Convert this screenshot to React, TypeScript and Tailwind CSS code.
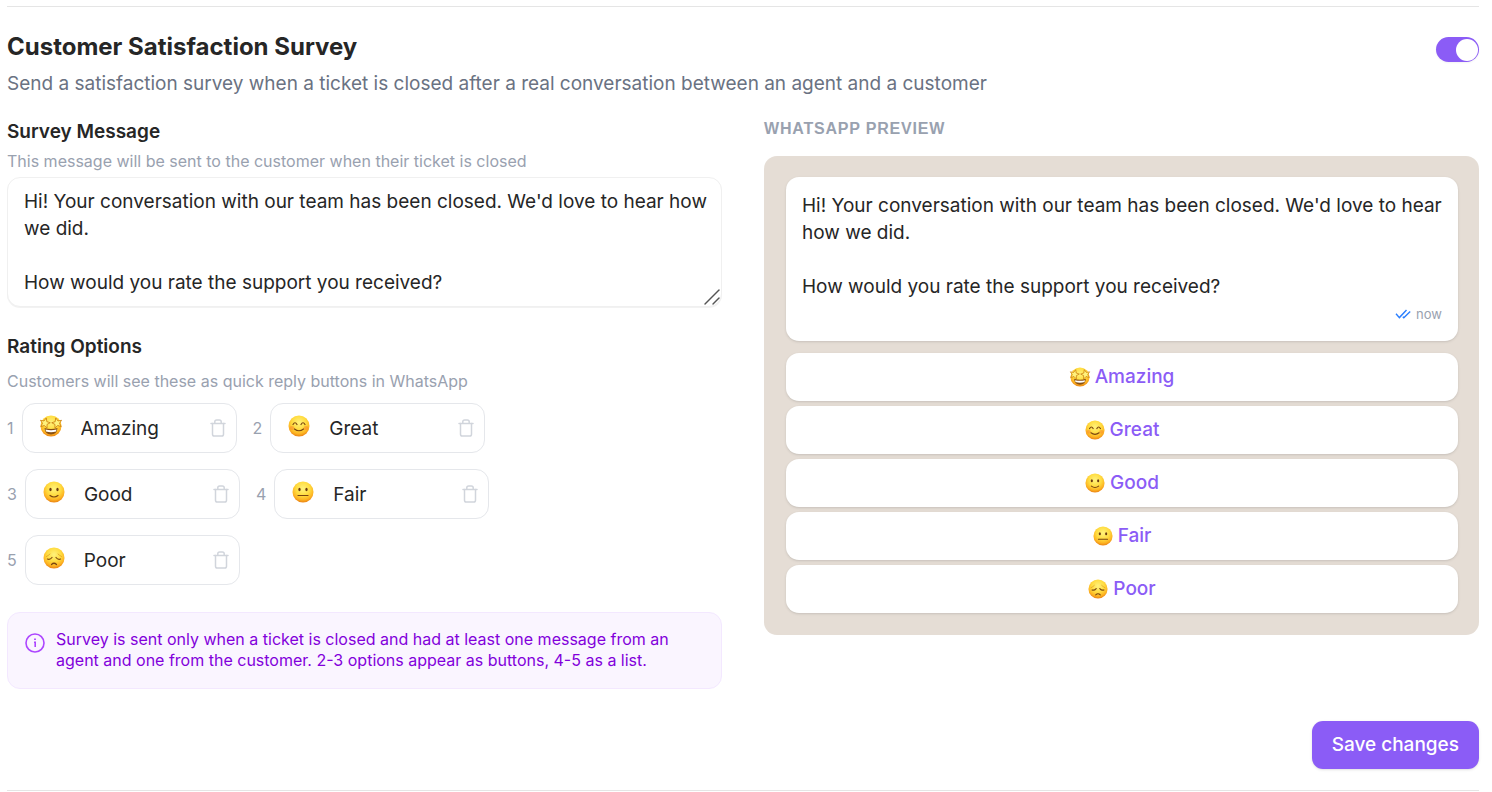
import React, { useState } from 'react';

type Mood = 'amazing' | 'great' | 'good' | 'fair' | 'poor';

interface RatingOption {
  id: Mood;
  label: string;
}

const initialOptions: RatingOption[] = [
  { id: 'amazing', label: 'Amazing' },
  { id: 'great', label: 'Great' },
  { id: 'good', label: 'Good' },
  { id: 'fair', label: 'Fair' },
  { id: 'poor', label: 'Poor' },
];

const defaultMessage =
  "Hi! Your conversation with our team has been closed. We'd love to hear how we did.\n\nHow would you rate the support you received?";

const star = 'M0 -7.2 L2 -2.4 L7 -2.1 L3.2 1.2 L4.4 6.2 L0 3.5 L-4.4 6.2 L-3.2 1.2 L-7 -2.1 L-2 -2.4 Z';

const Face: React.FC<{ mood: Mood; className: string }> = ({ mood, className }) => (
  <svg viewBox="0 0 44 44" className={`overflow-visible ${className}`} aria-hidden="true">
    <defs>
      <radialGradient id="face-fill" cx="50%" cy="34%" r="66%">
        <stop offset="0" stopColor="#fff27c" />
        <stop offset="0.5" stopColor="#ffdc40" />
        <stop offset="0.8" stopColor="#fdb422" />
        <stop offset="1" stopColor="#ea8213" />
      </radialGradient>
    </defs>
    <circle cx="22" cy="22" r="21" fill="url(#face-fill)" />

    {mood === 'amazing' && (
      <>
        <path d="M9 26 Q22 30 35 26 Q34 39 22 39 Q10 39 9 26 Z" fill="#8a5012" />
        <path d="M11 29 Q22 32 33 29 L32 33 Q22 36 12 33 Z" fill="#fff" />
        <g fill="#fff27c" stroke="#c87a0c" strokeWidth="1" strokeLinejoin="round">
          <path d={star} transform="translate(10 16) rotate(14) scale(1.45)" />
          <path d={star} transform="translate(34 16) rotate(-14) scale(1.45)" />
        </g>
      </>
    )}

    {mood === 'great' && (
      <>
        <ellipse cx="8" cy="26" rx="5" ry="4" fill="#f9862a" opacity="0.5" />
        <ellipse cx="36" cy="26" rx="5" ry="4" fill="#f9862a" opacity="0.5" />
        <g fill="none" stroke="#7a4510" strokeWidth="2.4" strokeLinecap="round">
          <path d="M10 19 Q14 12 18 19" />
          <path d="M26 19 Q30 12 34 19" />
          <path d="M13 28 Q22 35 31 28" />
        </g>
      </>
    )}

    {mood === 'good' && (
      <>
        <ellipse cx="15" cy="17" rx="2.3" ry="3.4" fill="#6b3a10" />
        <ellipse cx="29" cy="17" rx="2.3" ry="3.4" fill="#6b3a10" />
        <path d="M14 29 Q22 35 30 29" fill="none" stroke="#7a4510" strokeWidth="2.4" strokeLinecap="round" />
      </>
    )}

    {mood === 'fair' && (
      <>
        <ellipse cx="15" cy="17" rx="2.3" ry="3.4" fill="#6b3a10" />
        <ellipse cx="29" cy="17" rx="2.3" ry="3.4" fill="#6b3a10" />
        <path d="M12 29 H32" stroke="#7a4510" strokeWidth="2.4" strokeLinecap="round" />
      </>
    )}

    {mood === 'poor' && (
      <g fill="none" stroke="#7a4510" strokeWidth="2.4" strokeLinecap="round">
        <path d="M7 19 Q11 17 14 14" strokeWidth="1.4" stroke="#d99320" />
        <path d="M37 19 Q33 17 30 14" strokeWidth="1.4" stroke="#d99320" />
        <path d="M9 24 Q14 26 18 21" />
        <path d="M35 24 Q30 26 26 21" />
        <path d="M17 35 Q22 30 27 35" />
      </g>
    )}
  </svg>
);

const TrashIcon: React.FC = () => (
  <svg
    viewBox="0 0 16 18"
    className="h-[18px] w-4"
    fill="none"
    stroke="currentColor"
    strokeWidth="1.5"
    strokeLinecap="round"
    strokeLinejoin="round"
    aria-hidden="true"
  >
    <path d="M1 4.5H15" />
    <path d="M2.5 4.5V15.2A1.8 1.8 0 0 0 4.3 17H11.7A1.8 1.8 0 0 0 13.5 15.2V4.5" />
    <path d="M4.8 4.3V2.8A1.8 1.8 0 0 1 6.6 1H9.4A1.8 1.8 0 0 1 11.2 2.8V4.3" />
  </svg>
);

const InfoIcon: React.FC = () => (
  <svg viewBox="0 0 20 20" className="mt-1 h-5 w-5 shrink-0 text-[#ad46ff]" fill="none" stroke="currentColor" strokeWidth="1.6" aria-hidden="true">
    <circle cx="10" cy="10" r="9" />
    <path d="M9 9.2H10.2V14" />
    <path d="M10 5.6V6.9" strokeWidth="1.8" />
  </svg>
);

const ReadTicks: React.FC = () => (
  <svg viewBox="0 0 16 10" className="h-[10px] w-4" fill="none" stroke="#2b7fff" strokeWidth="1.4" aria-hidden="true">
    <path d="M1 4.8L4.4 8.6L11.5 1" />
    <path d="M7.8 7.8L8.8 8.8L15.2 2.4" />
  </svg>
);

export default function App() {
  const [enabled, setEnabled] = useState<boolean>(true);
  const [message, setMessage] = useState<string>(defaultMessage);
  const [options, setOptions] = useState<RatingOption[]>(initialOptions);

  const renameOption = (id: Mood, label: string) => {
    setOptions(options.map((option) => (option.id === id ? { ...option, label } : option)));
  };

  const removeOption = (id: Mood) => {
    setOptions(options.filter((option) => option.id !== id));
  };

  return (
    <main className="bg-white pt-[6px] pr-[13px] pl-[7px] font-['Inter',sans-serif] text-[#262626]">
      <section className="border-y border-[#e5e5e5] pt-6 pb-[21px]">
        {/* Header */}
        <div className="flex items-start justify-between gap-4">
          <div>
            <h2 className="text-2xl leading-8 font-bold">Customer Satisfaction Survey</h2>
            <p className="mt-[7px] text-[19px] leading-7 text-[#6a7282]">
              Send a satisfaction survey when a ticket is closed after a real conversation between an agent and a customer
            </p>
          </div>
          <label className="mt-[6px] inline-flex shrink-0 cursor-pointer">
            <input
              type="checkbox"
              role="switch"
              aria-label="Customer Satisfaction Survey"
              checked={enabled}
              onChange={(e) => setEnabled(e.target.checked)}
              className="peer sr-only"
            />
            <span className="flex h-[25px] w-[43px] items-center rounded-full bg-gray-300 px-px shadow-xs peer-checked:justify-end peer-checked:bg-[#8b5cf6]">
              <span className="size-[22px] rounded-full bg-white" />
            </span>
          </label>
        </div>

        <div className="mt-5 grid grid-cols-2 gap-[42px]">
          {/* Editor */}
          <div>
            <label htmlFor="survey-message" className="block text-[19px] leading-7 font-semibold">
              Survey Message
            </label>
            <p className="mt-[5px] text-base leading-[21px] text-[#99a1af]">
              This message will be sent to the customer when their ticket is closed
            </p>
            <div className="relative mt-[5px]">
              <textarea
                id="survey-message"
                rows={4}
                value={message}
                onChange={(e) => setMessage(e.target.value)}
                className="block w-full resize-none overflow-hidden rounded-[13px] border border-[#f0f0f0] bg-white py-[10px] pr-3 pl-4 text-[19px] leading-[27px] shadow-2xs outline-none"
              />
              <svg viewBox="0 0 16 16" className="pointer-events-none absolute right-[2px] bottom-[2px] size-4" stroke="#555" strokeWidth="1.4" strokeLinecap="round" aria-hidden="true">
                <path d="M1 15L15 1" />
                <path d="M9 15L15 9" />
              </svg>
            </div>

            <h3 className="mt-[26px] text-[19px] leading-7 font-semibold">Rating Options</h3>
            <p className="mt-[10px] text-base leading-[21px] text-[#99a1af]">
              Customers will see these as quick reply buttons in WhatsApp
            </p>

            <ol className="mt-[11px] flex flex-wrap gap-4">
              {options.map((option, idx) => (
                <li key={option.id} className="flex items-center gap-2">
                  <span className="text-base text-[#99a1af]">{idx + 1}</span>
                  <div className="flex h-[50px] w-[215px] items-center rounded-[13px] border border-[#e5e7eb] pr-[10px] pl-[17px]">
                    <button type="button" aria-label={`Change emoji for ${option.label}`} className="mb-1 shrink-0">
                      <Face mood={option.id} className="size-[22px]" />
                    </button>
                    <input
                      type="text"
                      aria-label={`Rating option ${idx + 1}`}
                      value={option.label}
                      onChange={(e) => renameOption(option.id, e.target.value)}
                      className="ml-[19px] w-full min-w-0 flex-1 bg-transparent pt-[2px] text-[19px] leading-7 outline-none"
                    />
                    <button
                      type="button"
                      aria-label={`Remove ${option.label}`}
                      onClick={() => removeOption(option.id)}
                      className="shrink-0 text-[#d1d5dc]"
                    >
                      <TrashIcon />
                    </button>
                  </div>
                </li>
              ))}
            </ol>

            <div className="mt-[27px] flex items-start gap-[11px] rounded-[13px] border border-[#f3e8ff] bg-[#faf5ff] py-4 pr-4 pl-[17px]">
              <InfoIcon />
              <p className="pb-px text-base leading-[21px] text-[#8200db]">
                Survey is sent only when a ticket is closed and had at least one message from an agent and one from the
                customer. 2-3 options appear as buttons, 4-5 as a list.
              </p>
            </div>
          </div>

          {/* Preview */}
          <div>
            <h3 className="font-['Liberation_Sans',sans-serif] text-base leading-[22px] font-bold tracking-wider text-[#99a1af] uppercase">
              WhatsApp Preview
            </h3>
            <div className="mt-4 rounded-[13px] bg-[#e5ddd5] pt-[21px] pr-[21px] pb-[22px] pl-[22px]">
              <div className="rounded-[13px] bg-white pt-[15px] pr-4 pb-[17px] pl-4 shadow-sm">
                <p className="-mr-1 text-[19px] leading-[27px] whitespace-pre-wrap">{message}</p>
                <div className="mt-1 flex items-center justify-end gap-[5px]">
                  <ReadTicks />
                  <span className="text-[13px] leading-5 text-[#99a1af]">now</span>
                </div>
              </div>
              <div className="mt-3 flex flex-col gap-[5px]">
                {options.map((option) => (
                  <button
                    key={option.id}
                    type="button"
                    className="flex h-12 items-center justify-center gap-[5px] rounded-[13px] bg-white text-[19px] font-medium text-[#8b5cf6] shadow-sm"
                  >
                    <Face mood={option.id} className="size-5" />
                    {option.label}
                  </button>
                ))}
              </div>
            </div>
          </div>
        </div>

        <div className="mt-8 flex justify-end">
          <button type="button" className="h-12 rounded-[11px] bg-[#8b5cf6] px-5 text-[19px] font-medium text-white shadow-sm">
            Save changes
          </button>
        </div>
      </section>
    </main>
  );
}
